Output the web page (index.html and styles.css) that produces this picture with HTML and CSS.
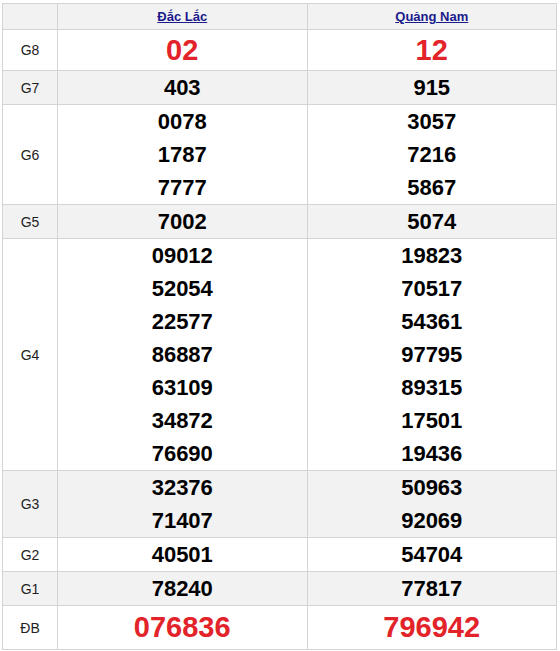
FILE: index.html
```html
<!DOCTYPE html>
<html lang="vi">
<head>
<meta charset="utf-8">
<link rel="stylesheet" href="styles.css">
</head>
<body>
<table class="kq">
  <thead>
    <tr class="alt">
      <th class="lbl"></th>
      <th class="prov"><a href="#">Đắc Lắc</a></th>
      <th class="prov"><a href="#">Quảng Nam</a></th>
    </tr>
  </thead>
  <tbody>
    <tr class="g8">
      <td class="lbl">G8</td>
      <td class="num red big">02</td>
      <td class="num red big">12</td>
    </tr>
    <tr class="alt">
      <td class="lbl">G7</td>
      <td class="num">403</td>
      <td class="num">915</td>
    </tr>
    <tr>
      <td class="lbl">G6</td>
      <td class="num"><div>0078</div><div>1787</div><div>7777</div></td>
      <td class="num"><div>3057</div><div>7216</div><div>5867</div></td>
    </tr>
    <tr class="alt">
      <td class="lbl">G5</td>
      <td class="num">7002</td>
      <td class="num">5074</td>
    </tr>
    <tr>
      <td class="lbl">G4</td>
      <td class="num"><div>09012</div><div>52054</div><div>22577</div><div>86887</div><div>63109</div><div>34872</div><div>76690</div></td>
      <td class="num"><div>19823</div><div>70517</div><div>54361</div><div>97795</div><div>89315</div><div>17501</div><div>19436</div></td>
    </tr>
    <tr class="alt">
      <td class="lbl">G3</td>
      <td class="num"><div>32376</div><div>71407</div></td>
      <td class="num"><div>50963</div><div>92069</div></td>
    </tr>
    <tr>
      <td class="lbl">G2</td>
      <td class="num">40501</td>
      <td class="num">54704</td>
    </tr>
    <tr class="alt">
      <td class="lbl">G1</td>
      <td class="num">78240</td>
      <td class="num">77817</td>
    </tr>
    <tr class="db">
      <td class="lbl">ĐB</td>
      <td class="num red big">076836</td>
      <td class="num red big">796942</td>
    </tr>
  </tbody>
</table>
</body>
</html>
```

FILE: styles.css
```css
html, body {
  margin: 0;
  padding: 0;
  background: #fff;
}

body {
  padding: 3px 3px 0 2px;
  font-family: "Liberation Sans", Arial, sans-serif;
}

.kq {
  width: 555px;
  border-collapse: collapse;
  table-layout: fixed;
}

.kq th,
.kq td {
  border: 1px solid #d4d4d4;
  padding: 0;
  text-align: center;
  vertical-align: middle;
}

.kq .lbl {
  width: 54px;
  font-size: 14px;
  font-weight: normal;
  color: #222;
}

.kq .prov {
  height: 25px;
  font-size: 13px;
  font-weight: bold;
}

.kq .prov a {
  color: #1a1a8c;
  text-decoration: underline;
}

.alt th,
.alt td {
  background: #f2f2f2;
}

.num {
  font-size: 22px;
  font-weight: bold;
  line-height: 33px;
  color: #000;
}

.num.red {
  color: #e3232a;
}

.num.big {
  font-size: 29px;
}

.g8 .num {
  line-height: 40px;
}

.db .num {
  line-height: 43px;
}
```
